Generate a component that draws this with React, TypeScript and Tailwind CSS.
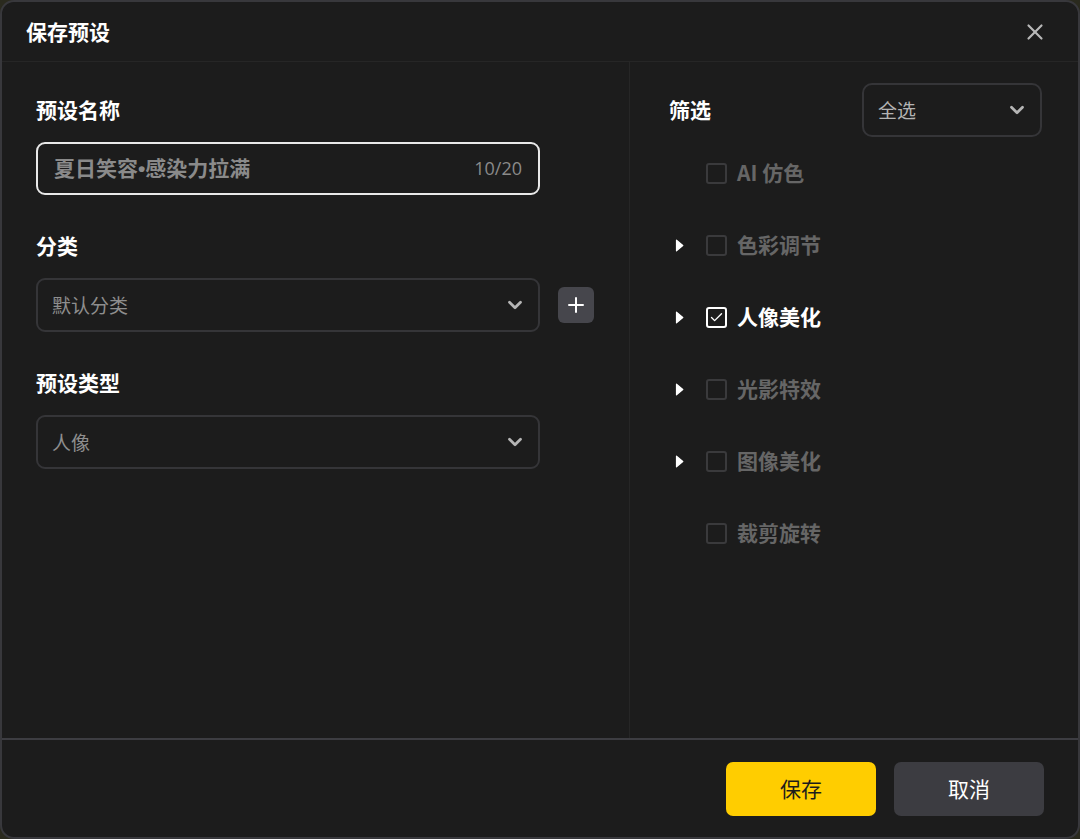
import { ChevronDown, Plus, X, Check } from 'lucide-react';

const font = { fontFamily: '"Noto Sans CJK SC", "Noto Sans", sans-serif' };

const filters = [
  { label: 'AI 仿色', expandable: false, checked: false },
  { label: '色彩调节', expandable: true, checked: false },
  { label: '人像美化', expandable: true, checked: true },
  { label: '光影特效', expandable: true, checked: false },
  { label: '图像美化', expandable: true, checked: false },
  { label: '裁剪旋转', expandable: false, checked: false },
];

function Caret() {
  return (
    <svg width="9" height="13" viewBox="0 0 9 13" className="text-white">
      <path d="M1.5 1.2 L7.8 6.5 L1.5 11.8 Z" fill="currentColor" stroke="currentColor" strokeWidth="1.2" strokeLinejoin="round" />
    </svg>
  );
}

function SelectBox({ value, className }: { value: string; className?: string }) {
  return (
    <div
      className={`flex h-[54px] items-center justify-between rounded-[9px] border-2 border-[#353538] pl-[14px] pr-[12px] ${className ?? ''}`}
    >
      <span className="text-[19px] text-[#8e8e8e]">{value}</span>
      <ChevronDown className="h-[22px] w-[22px] text-[#b5b5b5]" strokeWidth={3} />
    </div>
  );
}

export default function App() {
  return (
    <div className="h-[839px] w-[1080px] bg-[#2a2a1e]" style={font}>
      <div className="flex h-full w-full flex-col overflow-hidden rounded-[14px] border-2 border-[#38383c] bg-[#1c1c1c]">
        {/* header */}
        <div className="flex h-[60px] shrink-0 items-center justify-between border-b border-[#262626] pl-[24px] pr-[30px]">
          <h2 className="text-[21px] font-bold text-white">保存预设</h2>
          <X className="h-[26px] w-[26px] text-[#b8b8b8]" strokeWidth={2} />
        </div>

        {/* body */}
        <div className="flex min-h-0 flex-1">
          <div className="w-[628px] shrink-0 border-r border-[#262626] pl-[34px] pt-[36px]">
            <div className="flex h-[24px] items-center text-[21px] font-bold text-white">预设名称</div>
            <div className="mt-[20px] flex h-[53px] w-[504px] items-center justify-between rounded-[9px] border-2 border-[#e8e8e8] pl-[16px] pr-[16px]">
              <span className="text-[21px] font-bold text-[#8a8a8a]">
                夏日笑容<span style={{ fontFamily: '"Liberation Sans", sans-serif' }}>•</span>感染力拉满
              </span>
              <span className="text-[18px] text-[#8a8a8a]" style={{ fontFamily: '"Open Sans", "Noto Sans", sans-serif' }}>
                10/20
              </span>
            </div>

            <div className="mt-[39px] flex h-[24px] items-center text-[21px] font-bold text-white">分类</div>
            <div className="mt-[20px] flex items-center gap-[18px]">
              <SelectBox value="默认分类" className="w-[504px]" />
              <button className="flex h-[36px] w-[36px] items-center justify-center rounded-[6px] bg-[#46464c]">
                <Plus className="h-[24px] w-[24px] text-white" strokeWidth={2} />
              </button>
            </div>

            <div className="mt-[39px] flex h-[24px] items-center text-[21px] font-bold text-white">预设类型</div>
            <div className="mt-[20px]">
              <SelectBox value="人像" className="w-[504px]" />
            </div>
          </div>

          <div className="flex-1 pl-[39px] pr-[36px] pt-[21px]">
            <div className="flex items-center justify-between">
              <span className="text-[21px] font-bold text-white">筛选</span>
              <SelectBox value="全选" className="w-[180px] rounded-[10px] [&>span]:text-[#b3b3b3]" />
            </div>
            <div className="flex flex-col">
              {filters.map((f) => (
                <div key={f.label} className="flex h-[72px] items-center">
                  <div className="flex w-[37px] items-center pl-[6px]">{f.expandable && <Caret />}</div>
                  <div
                    className={`flex h-[21px] w-[21px] items-center justify-center rounded-[3px] border-2 ${
                      f.checked ? 'border-white' : 'border-[#3a3a3c]'
                    }`}
                  >
                    {f.checked && <Check className="h-[15px] w-[15px] text-white" strokeWidth={2.2} />}
                  </div>
                  <span
                    className={`ml-[10px] text-[21px] font-bold ${f.checked ? 'text-white' : 'text-[#666666]'}`}
                  >
                    {f.label}
                  </span>
                </div>
              ))}
            </div>
          </div>
        </div>

        {/* footer */}
        <div className="flex h-[99px] shrink-0 items-center justify-end gap-[18px] border-t-2 border-[#3d3d42] pr-[34px]">
          <button className="h-[54px] w-[150px] rounded-[7px] bg-[#ffcd00] text-[21px] text-[#1c1c1c]">保存</button>
          <button className="h-[54px] w-[150px] rounded-[7px] bg-[#3c3c41] text-[21px] text-white">取消</button>
        </div>
      </div>
    </div>
  );
}
